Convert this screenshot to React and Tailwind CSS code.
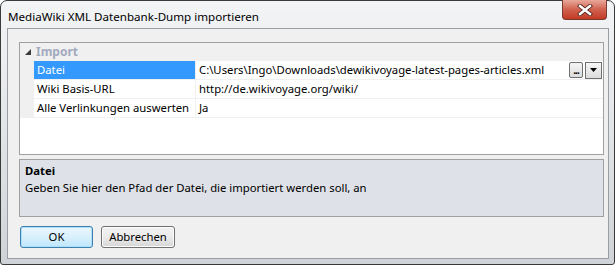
export default function App() {
  const rows = [
    { label: "Datei", value: "C:\\Users\\Ingo\\Downloads\\dewikivoyage-latest-pages-articles.xml", selected: true },
    { label: "Wiki Basis-URL", value: "http://de.wikivoyage.org/wiki/" },
    { label: "Alle Verlinkungen auswerten", value: "Ja" },
  ];
  return (
    <div className="w-[616px] h-[266px] bg-white font-['Noto_Sans',sans-serif] text-[11.3px] text-black leading-none whitespace-nowrap">
      <div className="relative w-[615px] h-[265px] border border-[#3a3a3a] rounded-t-[7px] rounded-b-[3px] bg-gradient-to-b from-[#f3f4f6] via-[#e2e5e8] to-[#cfd3d7] flex flex-col">
        <div className="h-[27px] flex items-center pl-[7px] pt-[4px]">
          <span className="text-[11.6px] text-black">MediaWiki XML Datenbank-Dump importieren</span>
        </div>
        <div className="absolute right-[7px] top-[-1px] w-[45px] h-[20px] rounded-b-[4px] border border-[#7a3a30] border-t-0 bg-gradient-to-b from-[#e8a89a] via-[#d0614e] to-[#c23a24] flex items-center justify-center">
          <svg width="16" height="12" viewBox="0 0 16 12">
            <path d="M3 2 L13 10 M13 2 L3 10" stroke="#5a2a22" strokeWidth="4.2" strokeLinecap="square" />
            <path d="M3 2 L13 10 M13 2 L3 10" stroke="#ffffff" strokeWidth="2.4" strokeLinecap="square" />
          </svg>
        </div>
        <div className="ml-[6px] mr-[5px] mb-[5px] flex-1 border border-[#9a9ea3] bg-[#f0f0f0] pl-[11px] pt-[13px] flex flex-col">
          <div className="w-[585px] h-[113px] border border-[#a0a0a0] bg-white flex flex-col">
            <div className="h-[18px] bg-[#f0f0f0] flex items-center">
              <div className="w-[14px] flex justify-center">
                <svg width="6" height="6" viewBox="0 0 6 6" className="ml-[2px]">
                  <polygon points="6,0 6,6 0,6" fill="#3a3a3a" />
                </svg>
              </div>
              <span className="ml-[2px] font-bold text-[12px] text-[#a3aabf]">Import</span>
            </div>
            {rows.map((r) => (
              <div key={r.label} className="flex h-[19px]">
                <div className="w-[14px] bg-[#f0f0f0]" />
                <div
                  className={
                    r.selected
                      ? "w-[162px] border-b border-r border-[#f0f0f0] bg-[#3399ff] text-white flex items-center pl-[3px]"
                      : "w-[162px] border-b border-r border-[#f0f0f0] flex items-center pl-[3px]"
                  }
                >
                  {r.label}
                </div>
                <div className="flex-1 border-b border-[#f0f0f0] flex items-center pl-[3px] pr-[1px]">
                  <span className="flex-1">{r.value}</span>
                  {r.selected && (
                    <div className="flex items-center gap-[2px]">
                      <div className="w-[14px] h-[16px] border border-[#707070] rounded-[2px] bg-gradient-to-b from-[#f6f6f6] to-[#dcdcdc] flex items-end justify-center pb-[2px]">
                        <span className="text-[10px] font-bold leading-none tracking-[-1px]">...</span>
                      </div>
                      <div className="w-[17px] h-[17px] border border-[#707070] bg-gradient-to-b from-[#f6f6f6] to-[#dcdcdc] flex items-center justify-center">
                        <svg width="7" height="4" viewBox="0 0 7 4">
                          <polygon points="0,0 7,0 3.5,4" fill="#000" />
                        </svg>
                      </div>
                    </div>
                  )}
                </div>
              </div>
            ))}
          </div>
          <div className="mt-[4px] w-[585px] h-[58px] border border-[#a0a0a0] bg-[#dee1e7] px-[5px] pt-[5px] flex flex-col gap-[6px]">
            <span className="font-bold">Datei</span>
            <span>Geben Sie hier den Pfad der Datei, die importiert werden soll, an</span>
          </div>
          <div className="mt-[9px] flex gap-[8px] pl-[1px]">
            <div className="w-[73px] h-[22px] rounded-[3px] border border-[#3c7fb1] bg-gradient-to-b from-[#eaf6fd] via-[#d9f0fc] to-[#bee6fd] flex items-center justify-center shadow-[inset_0_0_0_1px_#aee0f7]">
              OK
            </div>
            <div className="w-[74px] h-[22px] rounded-[3px] border border-[#707070] bg-gradient-to-b from-[#f2f2f2] via-[#ebebeb] to-[#d6d6d6] flex items-center justify-center shadow-[inset_0_0_0_1px_#fcfcfc]">
              Abbrechen
            </div>
          </div>
        </div>
      </div>
    </div>
  );
}
